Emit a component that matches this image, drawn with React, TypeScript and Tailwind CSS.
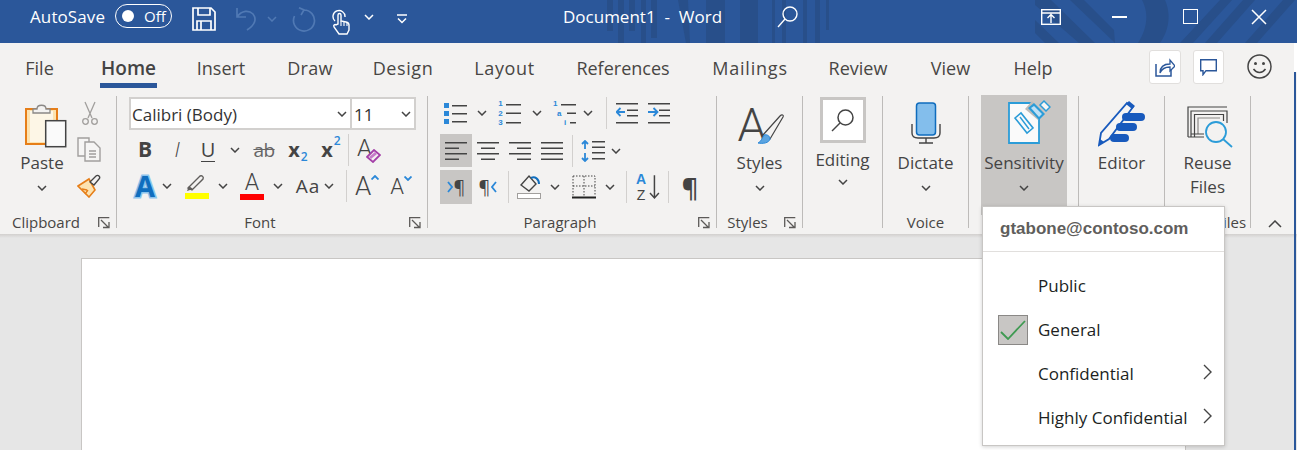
import type { ReactNode } from 'react';

const INK = '#444444';
const BLUE = '#2b88d8';

// Small chevrons used all over the ribbon
const Chev = ({ color = '#444444', className = '' }: { color?: string; className?: string }) => (
  <svg width="10" height="6" viewBox="0 0 10 6" className={`shrink-0 ${className}`}>
    <path d="M1 1l4 4 4-4" fill="none" stroke={color} strokeWidth="1.5" />
  </svg>
);

const Cell = ({ className = '', active = false, children }: { className?: string; active?: boolean; children?: ReactNode }) => (
  <div className={`flex h-full shrink-0 items-center justify-center ${active ? 'bg-[#c8c6c4]' : ''} ${className}`}>{children}</div>
);

const ChevCell = ({ className = '' }: { className?: string }) => (
  <Cell className={`w-[12px] ${className}`}>
    <Chev />
  </Cell>
);

const Sep = ({ className = '' }: { className?: string }) => <div className={`h-[32px] w-px shrink-0 bg-[#d2d0ce] ${className}`} />;

const Launcher = () => (
  <svg width="12" height="12" viewBox="0 0 12 12" className="shrink-0">
    <path d="M.7 10V.7h10.6M3 3l7 7M5 10.5h6V5" fill="none" stroke="#5c5a58" strokeWidth="1.3" />
  </svg>
);

function Group({ label, launcher = false, className, children }: { label: string; launcher?: boolean; className: string; children: ReactNode }) {
  return (
    <div className={`flex h-[132px] shrink-0 flex-col border-r border-[#bdbbb9] ${className}`}>
      <div className="h-[119px]">{children}</div>
      <div className="flex h-[13px] translate-y-px items-center">
        <div className="flex-1 whitespace-nowrap text-center text-[15px] leading-[13px] text-[#484644]">{label}</div>
        {launcher && (
          <div className="flex w-[24px] justify-center">
            <Launcher />
          </div>
        )}
      </div>
    </div>
  );
}

function Big({ icon, lines, chevron = true, className = '' }: { icon: ReactNode; lines: string[]; chevron?: boolean; className?: string }) {
  return (
    <div className={`flex flex-col items-center ${className}`}>
      <div className="flex h-[56px] items-start justify-center">{icon}</div>
      {lines.map((l) => (
        <div key={l} className="h-[24px] whitespace-nowrap text-[17px] leading-[22px] text-[#444]">
          {l}
        </div>
      ))}
      {chevron && (
        <div className="flex h-[24px] items-center">
          <Chev />
        </div>
      )}
    </div>
  );
}

const Lines = ({ rows }: { rows: [number, number, number][] }) => (
  <>
    {rows.map(([x, y, w], i) => (
      <rect key={i} x={x} y={y} width={w} height="1.5" fill={INK} />
    ))}
  </>
);

const Align = ({ rows }: { rows: [number, number][] }) => (
  <svg width="22" height="20" viewBox="0 0 22 20">
    <Lines rows={rows.map(([x, w], i) => [x, 1 + i * 5.5, w] as [number, number, number])} />
  </svg>
);

const Bullets = () => (
  <svg width="25" height="24" viewBox="0 0 25 24">
    <rect x="1" y="2" width="5" height="5" fill={BLUE} />
    <rect x="1" y="10" width="5" height="5" fill={BLUE} />
    <rect x="1" y="18" width="5" height="5" fill={BLUE} />
    <Lines rows={[[9, 4, 15], [9, 12, 15], [9, 20, 15]]} />
  </svg>
);

const Numbered = () => (
  <div className="flex items-center gap-[3px]">
    <div className="flex h-[28px] flex-col justify-between font-['Liberation_Sans',sans-serif] text-[8px] font-bold leading-[9px] text-[#2b88d8]">
      <span>1</span>
      <span>2</span>
      <span>3</span>
    </div>
    <svg width="16" height="25" viewBox="0 0 16 25">
      <Lines rows={[[0, 3, 15], [0, 11.5, 15], [0, 21, 15]]} />
    </svg>
  </div>
);

const Multi = () => (
  <div className="flex items-center">
    <div className="flex h-[28px] w-[14px] flex-col justify-between font-['Liberation_Sans',sans-serif] text-[8px] font-bold leading-[9px] text-[#2b88d8]">
      <span>1</span>
      <span className="ml-[4px]">a</span>
      <span className="ml-[11px]">i</span>
    </div>
    <svg width="10" height="25" viewBox="0 0 10 25" className="overflow-visible">
      <Lines rows={[[-6, 3, 15], [0, 11.5, 9], [3, 21, 6]]} />
    </svg>
  </div>
);

const Indent = ({ flip }: { flip?: boolean }) => (
  <svg width="23" height="22" viewBox="0 0 23 22">
    <Lines rows={[[0, 1, 22], [11, 7.5, 11], [11, 13, 11], [0, 20, 22]]} />
    {flip ? (
      <path d="M0 10h9M5.500 6l4 4-4 4" fill="none" stroke={BLUE} strokeWidth="1.800" />
    ) : (
      <path d="M9 10H1M4.500 6l-4 4 4 4" fill="none" stroke={BLUE} strokeWidth="1.800" />
    )}
  </svg>
);

const Paste = () => (
  <svg width="42" height="46" viewBox="0 0 42 46" className="ml-[7px] mt-[6px]">
    <rect x="1" y="7" width="31" height="35" fill="#fde3b0" stroke="#e67e18" strokeWidth="2" />
    <rect x="5" y="9" width="23" height="31" fill="#fdf6e6" />
    <path d="M8 11V7h4c0-5 9-5 9 0h4v4z" fill="#f3f2f1" stroke="#8a8886" strokeWidth="1.300" />
    <rect x="20.700" y="18.700" width="20" height="26" fill="#fafafa" stroke={INK} strokeWidth="1.500" />
  </svg>
);

const Scissors = () => (
  <svg width="16" height="25" viewBox="0 0 16 25" className="mt-[5px]">
    <g fill="none" stroke="#a19f9d" strokeWidth="1.300">
      <path d="M3 1l7 16M13 1L6 17" />
      <circle cx="3.500" cy="20.500" r="2.800" />
      <circle cx="12.500" cy="20.500" r="2.800" />
    </g>
  </svg>
);

const Copy = () => (
  <svg width="25" height="25" viewBox="0 0 25 25" className="mt-[11px]">
    <g fill="#f6f5f4" stroke="#a19f9d" strokeWidth="1.400">
      <path d="M1 1h11v18H1z" />
      <path d="M8 5h9l6 6v13H8z" />
      <path d="M12 14h7M12 17h7M12 20h7" fill="none" />
    </g>
  </svg>
);

const Painter = () => (
  <svg width="25" height="24" viewBox="0 0 25 24" className="mt-[12px]">
    <path d="M1 12l11-7 6 11-6 7z" fill="#fde3b0" stroke="#e67e18" strokeWidth="1.600" />
    <path d="M5 15l5 1M8 20l3-4" stroke="#e67e18" strokeWidth="1.300" />
    <path d="M13 8l6-6c2-2 5 1 3 3l-5 6z" fill="#f3f2f1" stroke={INK} strokeWidth="1.300" />
  </svg>
);

function ClipboardGroup() {
  return (
    <Group label="Clipboard" launcher className="w-[117px]">
      <div className="flex">
        <Big icon={<Paste />} lines={['Paste']} className="ml-[7px] w-[70px]" />
        <div className="flex w-[25px] flex-col items-center">
          <Scissors />
          <Copy />
          <Painter />
        </div>
      </div>
    </Group>
  );
}

function FontGroup() {
  return (
    <Group label="Font" launcher className="w-[311px]">
      <div className="pl-[12px]">
        <div className="flex h-[34px] pt-px">
          <div className="flex w-[223px] items-center justify-between border-2 border-[#d2d0ce] bg-white pl-[1px] pr-[3px]">
            <span className="mt-[3px] whitespace-nowrap text-[17px] text-[#333]">Calibri (Body)</span>
            <Chev />
          </div>
          <div className="flex w-[64px] items-center justify-between border-2 border-l-0 border-[#d2d0ce] bg-white pl-[2px] pr-[3px]">
            <span className="mt-[3px] text-[17px] text-[#333]">11</span>
            <Chev />
          </div>
        </div>
        <div className="mt-[5px] flex h-[30px] items-center">
          <Cell className="w-[32px] text-[21px] font-bold text-[#444]">B</Cell>
          <Cell className="w-[32px] text-[21px] font-light italic text-[#444]">I</Cell>
          <Cell className="w-[30px]">
            <span className="border-b-[1.5px] border-[#444] text-[20px] leading-[22px] text-[#444]">U</span>
          </Cell>
          <ChevCell className="mx-[6px]" />
          <Cell className="w-[34px] text-[19px] tracking-[-0.5px] text-[#666] line-through">ab</Cell>
          <Cell className="w-[34px] text-[20px] font-bold text-[#444]">
            x<sub className="bottom-[-7px] ml-px text-[12px] font-semibold text-[#2b88d8]">2</sub>
          </Cell>
          <Cell className="w-[32px] text-[20px] font-bold text-[#444]">
            x<sup className="top-[-9px] ml-px text-[12px] font-semibold text-[#2b88d8]">2</sup>
          </Cell>
          <Sep className="ml-px" />
          <Cell className="w-[40px]">
            <div className="relative h-[26px] w-[24px] font-['Roboto',sans-serif] text-[24px] font-light leading-[22px] text-[#444]">
              A
              <svg width="15" height="14" viewBox="0 0 15 14" className="absolute left-[9px] top-[12px]">
                <path d="M1 8l7-7 6 5-7 7z" fill="#f3f2f1" stroke="#a43fa8" strokeWidth="1.800" />
                <path d="M3 8l6-5 2 2-6 5z" fill="#c67cc9" />
              </svg>
            </div>
          </Cell>
        </div>
        <div className="mt-[4px] flex h-[34px] items-center">
          <Cell className="w-[32px]">
            <span className="text-[29px] font-bold leading-[30px] text-[#106ebe] [-webkit-text-stroke:3px_#8cc4ec] [paint-order:stroke]">A</span>
          </Cell>
          <ChevCell />
          <Cell className="ml-[4px] w-[40px]">
            <svg width="24" height="26" viewBox="0 0 24 26">
              <path d="M3 15l12-12c2-1 4 1 3 3L7 17z" fill="#f3f2f1" stroke="#605e5c" strokeWidth="1.400" />
              <path d="M2 18l2-5 4 3z" fill="#605e5c" />
              <rect x="0" y="20" width="24" height="6" fill="#ffff00" />
            </svg>
          </Cell>
          <ChevCell />
          <Cell className="ml-[4px] w-[38px] flex-col">
            <span className="font-['Roboto',sans-serif] text-[23px] font-light leading-[20px] text-[#444]">A</span>
            <div className="mt-[1px] h-[6px] w-[24px] bg-[#ff0000]" />
          </Cell>
          <ChevCell className="ml-px" />
          <Cell className="ml-[10px] w-[28px] whitespace-nowrap text-[19px] tracking-[1px] text-[#444]">Aa</Cell>
          <ChevCell className="ml-px" />
          <Sep className="ml-[11px]" />
          <Cell className="w-[40px] items-start pt-[4px]">
            <span className="font-['Roboto',sans-serif] text-[26px] font-light leading-[26px] text-[#444]">A</span>
            <svg width="8" height="5" viewBox="0 0 8 5" className="mt-[2px]">
              <path d="M.5 4.500L4 1l3.500 3.500" fill="none" stroke={BLUE} strokeWidth="1.800" />
            </svg>
          </Cell>
          <Cell className="w-[28px] items-start pt-[6px]">
            <span className="font-['Roboto',sans-serif] text-[22px] font-light leading-[24px] text-[#444]">A</span>
            <svg width="8" height="5" viewBox="0 0 8 5" className="mt-[1px]">
              <path d="M.5.500L4 4 7.500.500" fill="none" stroke={BLUE} strokeWidth="1.800" />
            </svg>
          </Cell>
        </div>
      </div>
    </Group>
  );
}

function ParagraphGroup() {
  return (
    <Group label="Paragraph" launcher className="w-[289px]">
      <div className="pl-[12px]">
        <div className="mt-[2px] flex h-[30px] items-center">
          <Cell className="w-[30px]">
            <Bullets />
          </Cell>
          <ChevCell className="mx-[6px]" />
          <Cell className="w-[32px]">
            <Numbered />
          </Cell>
          <ChevCell className="mx-[5px]" />
          <Cell className="w-[34px]">
            <Multi />
          </Cell>
          <ChevCell />
          <Sep className="ml-[12px]" />
          <Cell className="w-[40px]">
            <Indent />
          </Cell>
          <Cell className="w-[24px]">
            <Indent flip />
          </Cell>
        </div>
        <div className="mt-[6px] flex h-[33px] items-center">
          <Cell active className="w-[32px]">
            <Align rows={[[0, 22], [0, 14], [0, 22], [0, 14]]} />
          </Cell>
          <Cell className="w-[32px]">
            <Align rows={[[0, 22], [4, 14], [0, 22], [4, 14]]} />
          </Cell>
          <Cell className="w-[32px]">
            <Align rows={[[0, 22], [8, 14], [0, 22], [8, 14]]} />
          </Cell>
          <Cell className="w-[32px]">
            <Align rows={[[0, 22], [0, 22], [0, 22], [0, 22]]} />
          </Cell>
          <Sep className="ml-[4px]" />
          <Cell className="ml-[3px] w-[34px]">
            <svg width="25" height="22" viewBox="0 0 25 22">
              <path d="M4 9V1M1 4l3-3 3 3M4 13v8M1 18l3 3 3-3" fill="none" stroke={BLUE} strokeWidth="1.800" />
              <Lines rows={[[11, 1, 13], [11, 6.500, 13], [11, 12, 13], [11, 18, 13]]} />
            </svg>
          </Cell>
          <ChevCell />
        </div>
        <div className="mt-[3px] flex h-[34px] items-center">
          <Cell active className="w-[32px] gap-[1px]">
            <svg width="6" height="12" viewBox="0 0 6 12">
              <path d="M1 1l4 5-4 5" fill="none" stroke={BLUE} strokeWidth="1.800" />
            </svg>
            <span className="text-[18px] leading-[20px] text-[#444]">¶</span>
          </Cell>
          <Cell className="w-[32px] gap-[1px]">
            <span className="text-[18px] leading-[20px] text-[#444]">¶</span>
            <svg width="6" height="12" viewBox="0 0 6 12">
              <path d="M5 1L1 6l4 5" fill="none" stroke={BLUE} strokeWidth="1.800" />
            </svg>
          </Cell>
          <Sep className="ml-[4px]" />
          <Cell className="ml-[4px] w-[32px]">
            <svg width="24" height="26" viewBox="0 0 24 26">
              <path d="M4 11l8-9 7 8-7 7z" fill="#f3f2f1" stroke={INK} strokeWidth="1.400" />
              <path d="M14 4c4-2 8 1 8 6" fill="none" stroke="#106ebe" strokeWidth="2" />
              <rect x=".500" y="19.500" width="23" height="5" fill="#fff" stroke="#a19f9d" />
            </svg>
          </Cell>
          <ChevCell className="ml-[4px]" />
          <Cell className="ml-[11px] w-[24px]">
            <svg width="24" height="24" viewBox="0 0 24 24">
              <path d="M1 1h22v20M1 1v20M1 11h22M12 1v20" fill="none" stroke={INK} strokeWidth="1" strokeDasharray="1.500 1.500" />
              <rect x="0" y="21.500" width="24" height="2" fill="#222" />
            </svg>
          </Cell>
          <ChevCell className="ml-[8px]" />
          <Sep className="ml-[10px]" />
          <Cell className="ml-[9px] w-[24px] items-center gap-[3px]">
            <div className="flex flex-col items-center font-['Liberation_Sans',sans-serif] text-[14px] leading-[16.5px]">
              <span className="font-bold text-[#2b88d8]">A</span>
              <span className="text-[#444]">Z</span>
            </div>
            <svg width="11" height="26" viewBox="0 0 11 26">
              <path d="M5.500 1v23M1 19l4.500 5 4.500-5" fill="none" stroke={INK} strokeWidth="1.500" />
            </svg>
          </Cell>
          <Sep className="ml-[8px]" />
          <Cell className="ml-[9px] w-[24px] text-[26px] font-semibold text-[#444]">¶</Cell>
        </div>
      </div>
    </Group>
  );
}

const StylesIcon = () => (
  <div className="relative ml-[3px] mt-[7px] h-[45px] w-[47px] font-['Roboto',sans-serif] text-[46px] font-light leading-[44px] text-[#444]">
    A
    <svg width="47" height="45" viewBox="0 0 47 45" className="absolute left-0 top-0">
      <path d="M25 32L42 13c2-2 4-1 3 1L32 36z" fill="#f3f2f1" stroke={INK} strokeWidth="1.200" />
      <path d="M26 32c3-1 6 1 6 4-1 4-7 5-12 4 3-1 4-5 6-8z" fill="#5ba4e0" stroke="#2b88d8" />
    </svg>
  </div>
);

const MicIcon = () => (
  <svg width="30" height="42" viewBox="0 0 30 42" className="mt-[6px]">
    <rect x="5.500" y="1" width="19" height="32" rx="3" fill="#83beec" stroke="#0f6cbd" strokeWidth="1.500" />
    <path d="M1 22v9c0 4 3 5 6 5h16c3 0 6-1 6-5v-9M15 36v5M8 41h14" fill="none" stroke={INK} strokeWidth="1.400" />
  </svg>
);

const SensitivityIcon = () => (
  <svg width="43" height="46" viewBox="0 0 43 46" className="ml-[10px] mt-[3px]">
    <path d="M1 4h22l8 8v32H1z" fill="#fafafa" stroke="#2b9cd8" strokeWidth="1.800" />
    <path d="M7 19l6-5 12 15-6 5z" fill="none" stroke="#2b9cd8" strokeWidth="1.600" />
    <path d="M12 18l9 12" stroke="#2b9cd8" strokeWidth="1.400" />
    <path d="M17 10L24 2l12 13-6 6z" fill="#bdbbb9" />
    <path d="M20 9l6-5 11 11-6 6z" fill="#2b9cd8" />
    <path d="M23 9l3-2 8 8-3 3z" fill="#bfe0f5" />
    <path d="M32 6l4-4 6 6-4 4z" fill="#f6f5f4" stroke="#2b9cd8" strokeWidth="1.500" />
  </svg>
);

const EditorIcon = () => (
  <svg width="47" height="47" viewBox="0 0 47 47" className="mt-[4px]">
    <path d="M29 3l6 4L11 39 1 45l2-12z" fill="#f6f5f4" stroke="#185abd" strokeWidth="1.800" />
    <path d="M28 4l3-3 6 5-3 3z" fill="#185abd" />
    <path d="M1 45l1-6 4 3z" fill="#185abd" />
    <rect x="24" y="13" width="23" height="8" rx="4" fill="#185abd" />
    <rect x="18" y="23" width="21" height="8" rx="4" fill="#185abd" />
    <rect x="12" y="34" width="19" height="8" rx="4" fill="#185abd" />
  </svg>
);

const ReuseIcon = () => (
  <svg width="46" height="42" viewBox="0 0 46 42" className="ml-[4px] mt-[10px]">
    <g fill="none" stroke={INK} strokeWidth="1.200">
      <path d="M1 31V1h39" />
      <path d="M4 31V5h36v12" />
      <path d="M7.500 31V8.500h29V15" />
      <path d="M11 28V12h22" stroke="#8a8886" />
      <path d="M1 31h16M4 28h13" />
    </g>
    <circle cx="29" cy="26" r="10" fill="#f3f2f1" stroke="#2b9cd8" strokeWidth="1.800" />
    <path d="M36 33l9 8" stroke="#2b9cd8" strokeWidth="1.800" />
  </svg>
);

function Ribbon() {
  return (
    <div className="flex h-[142px] bg-[#f3f2f1] pt-[4px]">
      <ClipboardGroup />
      <FontGroup />
      <ParagraphGroup />
      <Group label="Styles" launcher className="w-[86px]">
        <Big icon={<StylesIcon />} lines={['Styles']} />
      </Group>
      <Group label="" className="w-[80px]">
        <div className="flex flex-col items-center">
          <div className="mt-px flex h-[46px] w-[46px] items-center justify-center border-[3px] border-[#c8c6c4] bg-white">
            <svg width="24" height="24" viewBox="0 0 24 24">
              <circle cx="14.500" cy="9.500" r="7.500" fill="none" stroke={INK} strokeWidth="1.500" />
              <path d="M9 15l-8 8" stroke={INK} strokeWidth="1.500" />
            </svg>
          </div>
          <div className="mt-[6px] h-[22px] whitespace-nowrap text-[17px] leading-[22px] text-[#444]">Editing</div>
          <div className="flex h-[22px] items-center">
            <Chev />
          </div>
        </div>
      </Group>
      <Group label="Voice" className="w-[86px]">
        <Big icon={<MicIcon />} lines={['Dictate']} />
      </Group>
      <Group label="" className="w-[110px]">
        <Big
          icon={<SensitivityIcon />}
          lines={['Sensitivity']}
          className="-mt-px ml-[12px] h-[120px] w-[86px] bg-[#c8c6c4] pt-px"
        />
      </Group>
      <Group label="" className="w-[86px]">
        <Big icon={<EditorIcon />} lines={['Editor']} chevron={false} />
      </Group>
      <Group label="Reuse Files" className="w-[86px]">
        <Big icon={<ReuseIcon />} lines={['Reuse', 'Files']} chevron={false} />
      </Group>
      <div className="ml-[17px] mt-[124px]">
        <svg width="14" height="8" viewBox="0 0 14 8">
          <path d="M1 7l6-6 6 6" fill="none" stroke={INK} strokeWidth="1.500" />
        </svg>
      </div>
    </div>
  );
}

const TABS = [
  { label: 'File', className: 'ml-[25px] w-[29px]' },
  { label: 'Home', className: 'ml-[46px] w-[57px]', active: true },
  { label: 'Insert', className: 'ml-[40px] w-[48px]' },
  { label: 'Draw', className: 'ml-[43px] w-[44px] tracking-[0.3px]' },
  { label: 'Design', className: 'ml-[41px] w-[60px] tracking-[0.6px]' },
  { label: 'Layout', className: 'ml-[42px] w-[59px] tracking-[0.6px]' },
  { label: 'References', className: 'ml-[43px] w-[92px]' },
  { label: 'Mailings', className: 'ml-[44px] w-[74px] tracking-[0.8px]' },
  { label: 'Review', className: 'ml-[41px] w-[60px]' },
  { label: 'View', className: 'ml-[42px] w-[41px]' },
  { label: 'Help', className: 'ml-[42px] w-[40px]' },
];

function Tabs() {
  return (
    <div className="flex h-[49px] bg-[#f3f2f1]">
      {TABS.map((t) => (
        <div key={t.label} className={`flex shrink-0 flex-col items-center pt-[13px] ${t.className}`}>
          <div className={`h-[24px] whitespace-nowrap leading-[24px] ${t.active ? 'text-[19px] font-semibold text-[#444]' : 'text-[18px] text-[#484644]'}`}>
            {t.label}
          </div>
          {t.active && <div className="mt-[3px] h-[5px] w-full bg-[#2b579a]" />}
        </div>
      ))}
      <div className="ml-[96px] mt-[7px] flex h-[34px] w-[32px] items-center justify-center rounded-[3px] border border-[#e1dfdd] bg-white">
        <svg width="20" height="20" viewBox="0 0 20 20">
          <path d="M1 7v12h15v-6" fill="none" stroke="#2b579a" strokeWidth="1.500" />
          <path d="M5 16c0-6 4-9 10-9V3l5 6-5 5v-4c-4 0-8 1-10 6z" fill="none" stroke="#2b579a" strokeWidth="1.300" />
        </svg>
      </div>
      <div className="ml-[12px] mt-[7px] flex h-[34px] w-[31px] items-center justify-center rounded-[3px] border border-[#e1dfdd] bg-white">
        <svg width="17" height="17" viewBox="0 0 17 17">
          <path d="M.7.700h15.600v11H6l-3 4v-4H.7z" fill="none" stroke="#2b579a" strokeWidth="1.400" />
        </svg>
      </div>
      <div className="ml-[23px] mt-[11px]">
        <svg width="25" height="25" viewBox="0 0 25 25">
          <circle cx="12.500" cy="12.500" r="11.500" fill="none" stroke={INK} strokeWidth="1.500" />
          <circle cx="8.500" cy="9.500" r="1.500" fill={INK} />
          <circle cx="16.500" cy="9.500" r="1.500" fill={INK} />
          <path d="M6.500 15c3 4.500 9 4.500 12 0" fill="none" stroke={INK} strokeWidth="1.500" />
        </svg>
      </div>
    </div>
  );
}

// Faint artwork behind the title bar
const TitleArt = () => (
  <svg width="1297" height="43" viewBox="0 0 1297 43" className="absolute left-0 top-0">
    <g fill="#284f8a">
      <rect x="607" width="6" height="31" />
      <rect x="618" width="6" height="43" />
      <rect x="629" width="6" height="31" />
      <rect x="641" width="5" height="43" />
      <rect x="651" width="6" height="38" />
      <path d="M678 0h10l2 43h-4z" />
      <rect x="706" width="19" height="43" />
      <rect x="740" width="18" height="43" />
      <rect x="772" width="3" height="43" />
      <rect x="782" width="4" height="43" />
      <rect x="803" width="4" height="43" />
      <rect x="815" width="5" height="43" />
      <rect x="826" width="3" height="30" />
      <path d="M1035 20l24 23h-14l-10-10zM1035 0h16l44 43h-16l-44-38zM1070 0h14l30 30 1 13z" />
      <path d="M1142 0h23c7 16 3 32-5 43h-22c8-12 12-28 4-43z" />
      <path d="M1180 43l40-43h12l-39 43zM1205 43l38-43h12l-38 43zM1245 43l38-43h12l-38 43z" />
    </g>
  </svg>
);

function TitleBar() {
  return (
    <div className="relative h-[43px] bg-[#2b579a]">
      <TitleArt />
      <div className="relative flex h-full items-start pl-[30px] pt-[4px] text-white">
        <div className="h-[26px] w-[76px] whitespace-nowrap text-[17px] leading-[26px] tracking-[0.1px]">AutoSave</div>
        <div className="ml-[9px] flex h-[24px] w-[57px] items-center rounded-full border-[1.5px] border-white pl-[6px]">
          <div className="h-[12px] w-[12px] rounded-full bg-white" />
          <span className="ml-[10px] text-[15px] leading-none">Off</span>
        </div>
        <svg width="24" height="24" viewBox="0 0 24 24" className="ml-[20px] mt-[3px]">
          <path d="M1 1h18l4 4v18H1zM6 1v7h12V1M5 23v-9h14v9M9 14v9" fill="none" stroke="#fff" strokeWidth="1.700" />
        </svg>
        <svg width="22" height="24" viewBox="0 0 22 24" className="ml-[20px] mt-[3px]">
          <path d="M1 1v9h9M1 10c5-7 12-7 16-3 4 5 2 11-6 16" fill="none" stroke="#5079b4" strokeWidth="1.700" />
        </svg>
        <Chev color="#5079b4" className="ml-[9px] mt-[12px]" />
        <svg width="24" height="25" viewBox="0 0 24 25" className="ml-[15px] mt-[3px]">
          <path d="M12 3a10.500 10.500 0 1 1-9.500 6M7 .700L12 3l-3 5" fill="none" stroke="#5079b4" strokeWidth="1.700" />
        </svg>
        <svg width="18" height="27" viewBox="0 0 18 27" className="ml-[16px] mt-[4px]">
          <path d="M3 13A6 6 0 1 1 13 9" fill="none" stroke="#fff" strokeWidth="1.400" />
          <path d="M6 16V7a1.500 1.500 0 0 1 3 0v6l5 1c2 .500 3 1 3 3v5l-2 4H7l-5-7c-1-2 1-3 2-2z" fill="#2b579a" stroke="#fff" strokeWidth="1.400" />
          <path d="M9 13v5M12 14v4M15 15v3" stroke="#fff" strokeWidth="1.100" />
        </svg>
        <Chev color="#fff" className="ml-[14px] mt-[10px]" />
        <svg width="12" height="10" viewBox="0 0 12 10" className="ml-[22px] mt-[10px]">
          <path d="M1 1h10M2 4.500l4 4 4-4" fill="none" stroke="#fff" strokeWidth="1.500" />
        </svg>
        <div className="ml-[155px] h-[26px] w-[163px] whitespace-nowrap text-[17px] leading-[26px]">Document1&nbsp; -&nbsp; Word</div>
        <svg width="21" height="22" viewBox="0 0 21 22" className="ml-[51px] mt-[2px]">
          <circle cx="13" cy="8" r="7" fill="none" stroke="#fff" strokeWidth="1.400" />
          <path d="M8 13L1 21" stroke="#fff" strokeWidth="1.400" />
        </svg>
        <svg width="20" height="16" viewBox="0 0 20 16" className="ml-[243px] mt-[5px]">
          <rect x=".700" y=".700" width="18.600" height="14.600" fill="none" stroke="#fff" strokeWidth="1.400" />
          <path d="M1 4h18M10 14V6M6.500 9L10 5.500 13.500 9" fill="none" stroke="#fff" strokeWidth="1.400" />
        </svg>
        <div className="ml-[51px] mt-[12px] h-[2px] w-[15px] bg-white" />
        <div className="ml-[56px] mt-[5px] h-[15px] w-[15px] border-[1.5px] border-white" />
        <svg width="16" height="16" viewBox="0 0 16 16" className="ml-[53px] mt-[5px]">
          <path d="M1 1l14 14M15 1L1 15" stroke="#fff" strokeWidth="1.500" />
        </svg>
      </div>
    </div>
  );
}

const MENU = [
  { label: 'Public' },
  { label: 'General', checked: true },
  { label: 'Confidential', sub: true },
  { label: 'Highly Confidential', sub: true },
];

function SensitivityMenu() {
  return (
    <div className="absolute left-[982px] top-[206px] h-[240px] w-[243px] border border-[#c8c6c4] bg-white shadow-[0_1px_4px_rgba(0,0,0,0.18)]">
      <div className="flex h-[45px] items-center border-b border-[#e1dfdd] pl-[17px] font-['Liberation_Sans',sans-serif] text-[17px] font-bold text-[#605e5c]">
        gtabone@contoso.com
      </div>
      <div className="pt-[12px]">
        {MENU.map((m) => (
          <div key={m.label} className="flex h-[44px] items-center">
            <div className="flex w-[55px] justify-end pr-[10px]">
              {m.checked && (
                <div className="flex h-[30px] w-[30px] items-center justify-center border border-[#8a8886] bg-[#c8c6c4]">
                  <svg width="26" height="20" viewBox="0 0 26 20">
                    <path d="M1 12l7 7L25 1" fill="none" stroke="#3f9a52" strokeWidth="1.800" />
                  </svg>
                </div>
              )}
            </div>
            <div className="whitespace-nowrap text-[17px] text-[#201f1e]">{m.label}</div>
            {m.sub && (
              <svg width="9" height="16" viewBox="0 0 9 16" className="-mt-[4px] ml-auto mr-[12px]">
                <path d="M1 1l7 7-7 7" fill="none" stroke={INK} strokeWidth="1.400" />
              </svg>
            )}
          </div>
        ))}
      </div>
    </div>
  );
}

export default function App() {
  return (
    <div className="relative h-[450px] w-[1297px] overflow-hidden bg-[#e6e6e6] font-['Open_Sans',sans-serif]">
      <TitleBar />
      <Tabs />
      <Ribbon />
      <div className="h-[4px] bg-gradient-to-b from-[#d2d0ce] to-[#e6e6e6]" />
      <div className="ml-[81px] mt-[20px] h-[200px] w-[1105px] border border-[#c8c6c4] bg-white" />
      <SensitivityMenu />
      <div className="absolute right-0 top-[43px] h-[29px] w-[3px] bg-white" />
      <div className="absolute bottom-0 right-px top-[72px] w-[2px] bg-[#2b579a]" />
    </div>
  );
}
